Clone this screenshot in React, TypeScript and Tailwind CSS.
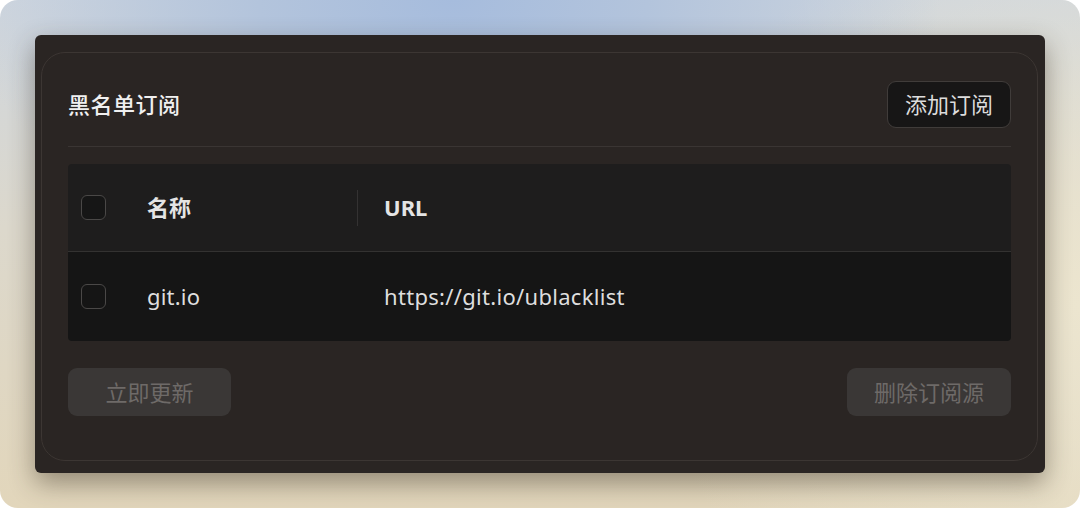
import React, { useState } from 'react';

const font = { fontFamily: '"Noto Sans", "Noto Sans CJK SC", sans-serif' };

function Checkbox({ checked, onChange, dark }: { checked: boolean; onChange: () => void; dark?: boolean }) {
  return (
    <button
      onClick={onChange}
      className={
        'w-[25px] h-[25px] rounded-[6px] border-[1.5px] border-[#4a4847] shrink-0 ' +
        (dark ? 'bg-[#161616]' : 'bg-transparent')
      }
    >
      {checked && (
        <svg viewBox="0 0 24 24" className="w-full h-full text-[#e6e6e6]" fill="none" stroke="currentColor" strokeWidth={3}>
          <path d="M5 12l5 5 9-10" />
        </svg>
      )}
    </button>
  );
}

export default function App() {
  const [all, setAll] = useState(false);
  const [row, setRow] = useState(false);

  return (
    <div className="w-[1080px] h-[508px] bg-white" style={font}>
      <div className="h-full rounded-[18px] overflow-hidden bg-[radial-gradient(ellipse_45%_55%_at_42%_0%,#a6bcdd_0%,#b3c4dc_40%,transparent_100%),radial-gradient(ellipse_40%_80%_at_100%_60%,#ece5cf_0%,transparent_100%),linear-gradient(180deg,#cfd6de_0%,#dcd8cc_45%,#e2d6bb_100%)] px-[35px] pt-[35px]">
        <div className="h-[438px] rounded-[6px] bg-[#2a2523] shadow-[0_10px_26px_rgba(50,42,28,0.45)] pl-[6px] pr-[7px] pt-[17px] pb-[12px]">
          <div className="h-full rounded-[24px] border border-[#3c3633] px-[26px] pt-[28px]">
            <div className="flex items-center justify-between h-[47px]">
              <h1 className="text-[22px] font-medium text-[#f0f0f0] tracking-[0.5px]">黑名单订阅</h1>
              <button className="h-[47px] px-[17px] rounded-[9px] bg-[#171616] border border-[#403c3a] text-[22px] text-[#dcdcdc]">
                添加订阅
              </button>
            </div>
            <div className="mt-[18px] h-px bg-[#3a3533]" />

            <div className="mt-[17px] rounded-[4px] overflow-hidden">
              <div className="h-[88px] bg-[#1e1d1d] flex items-center border-b border-[#333231]">
                <div className="w-[79px] pl-[13px] flex items-center">
                  <Checkbox checked={all} onChange={() => setAll(!all)} dark />
                </div>
                <div className="w-[210px] text-[22px] font-semibold text-[#e4e4e4]">名称</div>
                <div className="w-px h-[36px] bg-[#343232]" />
                <div className="pl-[26px] text-[22px] font-bold text-[#e4e4e4]">URL</div>
              </div>
              <div className="h-[89px] bg-[#151515] flex items-center">
                <div className="w-[79px] pl-[13px] flex items-center">
                  <Checkbox checked={row} onChange={() => setRow(!row)} />
                </div>
                <div className="w-[237px] text-[22px] tracking-[0.2px] text-[#dedede]">git.io</div>
                <div className="text-[22px] tracking-[0.3px] text-[#dedede]">https://git.io/ublacklist</div>
              </div>
            </div>

            <div className="mt-[27px] flex justify-between">
              <button disabled className="h-[48px] w-[163px] rounded-[9px] bg-[#3a3736] text-[22px] text-[#6e6a68]">
                立即更新
              </button>
              <button disabled className="h-[48px] w-[164px] rounded-[9px] bg-[#3a3736] text-[22px] text-[#6e6a68]">
                删除订阅源
              </button>
            </div>
          </div>
        </div>
      </div>
    </div>
  );
}
